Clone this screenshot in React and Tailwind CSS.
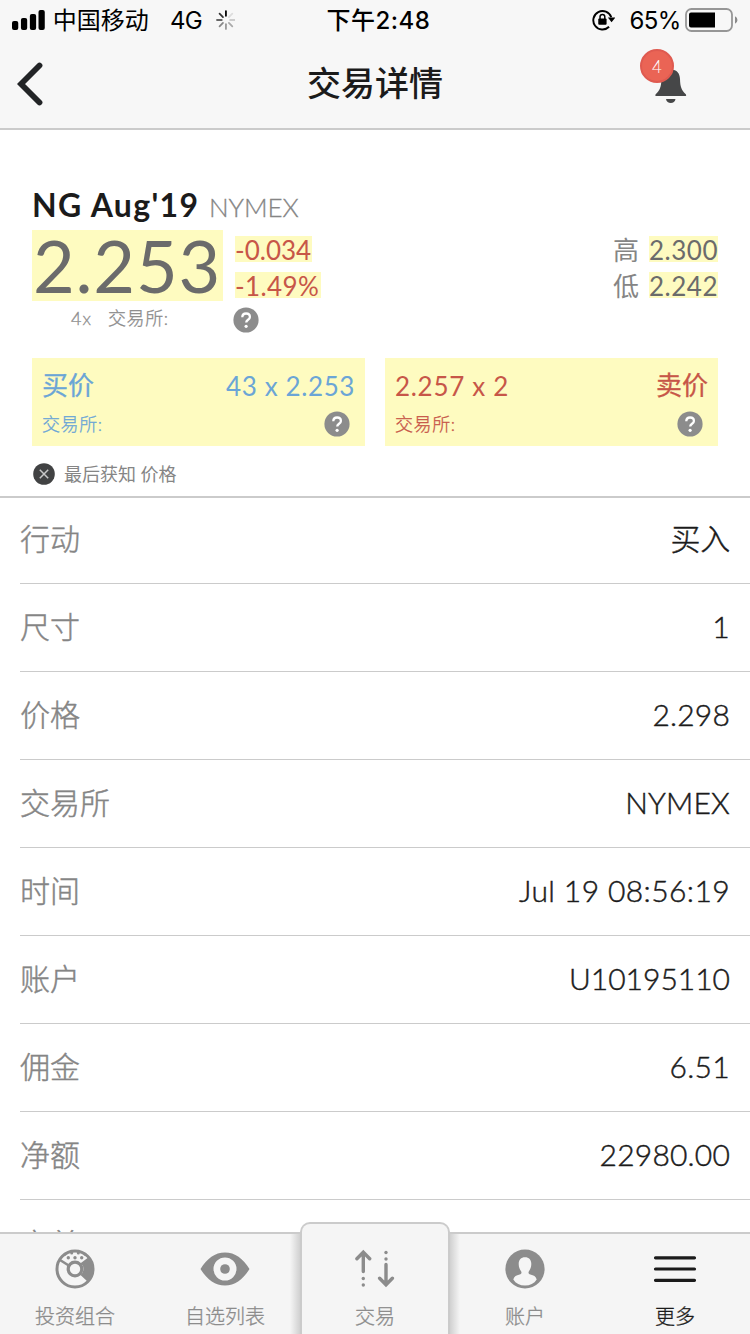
const rows = [
  ['行动', '买入', 'tracking-[-0.3px]'],
  ['尺寸', '1', 'tracking-[0.4px]'],
  ['价格', '2.298', 'tracking-[0.2px]'],
  ['交易所', 'NYMEX', 'tracking-[0.2px]'],
  ['时间', 'Jul 19 08:56:19', 'tracking-[0.4px]'],
  ['账户', 'U10195110', 'tracking-[0px]'],
  ['佣金', '6.51', 'tracking-[0.3px]'],
  ['净额', '22980.00', 'tracking-[0.2px]'],
  ['定单ID', '', ''],
];

function Help() {
  return (
    <svg width="26" height="26" viewBox="0 0 26 26" className="block shrink-0">
      <circle cx="13" cy="13" r="12.6" fill="#8c8c8c" />
      <path d="M9.3 10.2c0-2.3 1.6-3.7 3.8-3.7s3.8 1.4 3.8 3.4c0 2.9-3.7 2.8-3.7 5.7" fill="none" stroke="#fff" strokeWidth="2.3" />
      <circle cx="13.1" cy="19.3" r="1.6" fill="#fff" />
    </svg>
  );
}

function StatusBar() {
  return (
    <div className="flex h-10 items-center pl-3 pr-[11px] pt-[2px] text-[24px] leading-[38px] text-black">
      <svg width="33" height="20" viewBox="0 0 33 20" className="-mt-[3px] block">
        <rect x="0" y="11" width="6.300" height="9" rx="2" />
        <rect x="9" y="8" width="6.300" height="12" rx="2" />
        <rect x="18" y="4" width="6.300" height="16" rx="2" />
        <rect x="26.700" y="0" width="6.300" height="20" rx="2" />
      </svg>
      <span className="ml-2 w-[118px] whitespace-nowrap font-['Inter','Noto_Sans_CJK_SC',sans-serif]">中国移动</span>
      <span className="w-[46px] font-['Inter',sans-serif] text-[24px] tracking-[-0.6px]">4G</span>
      <svg width="20" height="20" viewBox="0 0 20 20" className="-mt-[3px] block" strokeWidth="1.8" strokeLinecap="round">
        <path d="M10 5.8V1" stroke="#000" />
        <path d="M13 7L16.4 3.6" stroke="#ddd" />
        <path d="M14.2 10H19" stroke="#ccc" />
        <path d="M13 13L16.4 16.4" stroke="#aaa" />
        <path d="M10 14.2V19" stroke="#999" />
        <path d="M7 13L3.6 16.4" stroke="#888" />
        <path d="M5.8 10H1" stroke="#666" />
        <path d="M7 7L3.6 3.6" stroke="#333" />
      </svg>
      <span className="ml-[91px] w-[266px] whitespace-nowrap font-['Inter','Noto_Sans_CJK_SC',sans-serif] font-medium tracking-[0.5px]">下午2:48</span>
      <svg width="24" height="22" viewBox="0 0 24 22" className="-mt-[2px] ml-px block">
        <path d="M19.4 8.200A9.300 9.300 0 1 0 17.2 17.800" fill="none" stroke="#000" strokeWidth="1.900" />
        <path d="M16 8.600H23.400L19.7 13.200z" />
        <rect x="6.300" y="9.500" width="8.400" height="6.200" rx="1" />
        <path d="M8.100 10V7.800a2.400 2.400 0 0 1 4.800 0V10" fill="none" stroke="#000" strokeWidth="1.500" />
      </svg>
      <span className="ml-[14px] w-[56px] font-['Inter',sans-serif] tracking-[-0.6px]">65%</span>
      <svg width="54" height="24" viewBox="0 0 54 24" className="-mt-[2px] block shrink-0">
        <rect x="1" y="1" width="46" height="22" rx="5.5" fill="none" stroke="#969696" strokeWidth="1.8" />
        <path d="M6 4.5H30V19.500H6a2 2 0 0 1-2-2V6.500a2 2 0 0 1 2-2z" fill="#000" />
        <path d="M50 8.300a4 4 0 0 1 0 7.400z" fill="#8a8a8a" />
      </svg>
    </div>
  );
}

function Header() {
  return (
    <header className="h-[130px] shrink-0 border-b-2 border-[#cbcbcb] bg-[#f7f7f7]">
      <StatusBar />
      <div className="flex h-[88px] items-center pl-[17px]">
        <svg width="30" height="44" viewBox="0 0 30 44" className="block">
          <path d="M22.500 3.500L4 22L22.500 40.500" fill="none" stroke="#222426" strokeWidth="5.800" strokeLinecap="round" strokeLinejoin="miter" />
        </svg>
        <h1 className="-mt-[3px] ml-[260px] w-[333px] text-[34px] font-medium leading-[50px] text-[#1b1b1b]">交易详情</h1>
        <div className="relative -mt-[12px] h-[58px] w-12">
          <svg width="48" height="58" viewBox="0 0 48 58" className="block" fill="#464748">
            <path d="M31 20.500c6 0 8.800 4 9 9.500c.2 8 1.500 11 5.800 15.200c.8.900.4 1.800-.8 1.800H16.500c-1.200 0-1.600-.900-.8-1.800c4.300-4.200 5.500-7.200 5.700-15.200C22.100 24.500 25 20.500 31 20.500z" />
            <path d="M26 50H35.500c-.3 2.700-2.300 4-4.700 4s-4.500-1.300-4.800-4z" />
          </svg>
          <span className="absolute left-0 top-0 flex size-[34px] items-center justify-center rounded-full border-2 border-[#df5a50] bg-[#ea6455] text-[17px] font-light leading-none text-white">4</span>
        </div>
      </div>
    </header>
  );
}

function Quote() {
  return (
    <section className="h-[368px] shrink-0 border-b-2 border-[#cbcbcb] px-8 pt-[52px]">
      <div className="flex h-12 items-baseline text-[#1b1b1b]">
        <span className="w-[177px] whitespace-nowrap text-[32px] font-bold leading-[46px] tracking-[1.35px]">NG Aug'19</span>
        <span className="text-[26px] font-light tracking-[-0.1px] text-[#858585] [-webkit-text-stroke:0.3px]">NYMEX</span>
      </div>
      <div className="flex h-[72px]">
        <div className="h-[71px] w-[191px] whitespace-nowrap bg-[#fefbc0] pl-px text-[72px] leading-[70px] tracking-[0.8px] text-[#6b6b6b]">2.253</div>
        <div className="ml-3 flex flex-col items-start gap-[10px] pt-1.5 text-[26px] leading-[28px] text-[#c75648]">
          <span className="h-[26px] w-[77px] whitespace-nowrap bg-[#fefbc0]">-0.034</span>
          <span className="h-[26px] w-[86px] whitespace-nowrap bg-[#fefbc0] tracking-[0.4px]">-1.49%</span>
        </div>
        <div className="ml-auto flex flex-col gap-[10px] pt-1.5 text-[26px] leading-[28px] text-[#6b6b6b]">
          <div className="flex h-[26px] gap-2.5"><span className="text-[#858585]">高</span><span className="w-[69px] bg-[#fefbc0] tracking-[0.5px]">2.300</span></div>
          <div className="flex h-[26px] gap-2.5"><span className="text-[#858585]">低</span><span className="w-[69px] bg-[#fefbc0] tracking-[0.5px]">2.242</span></div>
        </div>
      </div>
      <div className="flex h-9 items-center pl-[39px] text-[18px] text-[#8c8c8c]">
        <span className="-mt-[3px] w-[37px] font-light tracking-[1px] [-webkit-text-stroke:0.3px]">4x</span>
        <span className="-mt-[3px] w-[125px] font-light tracking-[0.6px] [-webkit-text-stroke:0.3px]">交易所:</span>
        <Help />
      </div>
      <div className="mt-5 flex gap-5">
        <div className="h-[88px] flex-1 bg-[#fefbc0] px-[10px] pt-[9px] text-[#6ba5d6]">
          <div className="flex h-9 items-center justify-between text-[26px] leading-9">
            <span className="[-webkit-text-stroke:0.3px]">买价</span>
            <span className="pt-[2px] tracking-[0.6px]">43 x 2.253</span>
          </div>
          <div className="mt-2 flex h-[26px] items-center justify-between pr-[5px] text-[18px]"><span className="font-light tracking-[0.6px] [-webkit-text-stroke:0.3px]">交易所:</span><Help /></div>
        </div>
        <div className="h-[88px] flex-1 bg-[#fefbc0] px-[10px] pt-[9px] text-[#c75648]">
          <div className="flex h-9 items-center justify-between text-[26px] leading-9">
            <span className="pt-[2px] tracking-[0.7px]">2.257 x 2</span>
            <span className="[-webkit-text-stroke:0.3px]">卖价</span>
          </div>
          <div className="mt-2 flex h-[26px] items-center justify-between pr-[5px] text-[18px]"><span className="font-light tracking-[0.6px] [-webkit-text-stroke:0.3px]">交易所:</span><Help /></div>
        </div>
      </div>
      <div className="mt-3.5 flex h-[28px] items-center gap-[9px] pl-px text-[18px] text-[#858585]">
        <svg width="22" height="22" viewBox="0 0 22 22" className="block">
          <circle cx="11" cy="11" r="10.800" fill="#414243" />
          <path d="M6.800 6.800L15.200 15.200M15.200 6.800L6.800 15.200" stroke="#c8c8c8" strokeWidth="1.500" />
        </svg>
        <span>最后获知 价格</span>
      </div>
    </section>
  );
}

function Donut() {
  return (
    <svg width="40" height="40" viewBox="0 0 40 40" className="block" fill="none" stroke="#8c8c8c">
      <path d="M26.500 14.500L35 9A18.500 18.500 0 0 1 32.500 32.500L25.500 26A8 8 0 0 0 26.500 14.500z" fill="#8c8c8c" stroke="none" />
      <circle cx="20" cy="20" r="18" strokeWidth="3" />
      <circle cx="20" cy="20" r="6.800" strokeWidth="3.200" />
      <path d="M5 11L14.500 17M34 9.500L26 15.500" strokeWidth="2.600" />
      <g fill="#8c8c8c" stroke="none">
        <circle cx="13.300" cy="8.800" r="1.700" /><circle cx="20" cy="8.800" r="1.700" /><circle cx="26.700" cy="8.800" r="1.700" />
        <circle cx="10" cy="5.300" r="1.500" /><circle cx="16.700" cy="4" r="1.500" /><circle cx="23.300" cy="4" r="1.500" /><circle cx="30" cy="5.300" r="1.500" />
      </g>
    </svg>
  );
}

function Eye() {
  return (
    <svg width="50" height="40" viewBox="0 0 50 40" className="block">
      <path fillRule="evenodd" fill="#8c8c8c" d="M.5 20C7 9.500 15 3.500 25 3.500S43 9.500 49.500 20C43 30.500 35 36.500 25 36.500S7 30.500 .5 20zM25 8.500a11.500 11.500 0 1 0 0 23a11.500 11.500 0 1 0 0-23z" />
      <circle cx="25" cy="20" r="4.800" fill="#8c8c8c" />
    </svg>
  );
}

function Arrows() {
  return (
    <svg width="40" height="40" viewBox="0 0 40 40" className="block" fill="none" stroke="#8c8c8c" strokeWidth="3.400" strokeLinecap="round">
      <path d="M8.300 22.500V5M1.900 9.800L8.300 3.200L14.700 9.800" />
      <path d="M31 15.500V34M24.600 29.200L31 35.800L37.400 29.200" />
      <g fill="#8c8c8c" stroke="none">
        <circle cx="8.300" cy="29.500" r="1.700" /><circle cx="8.300" cy="36" r="1.700" />
        <circle cx="31" cy="3.500" r="1.700" /><circle cx="31" cy="10" r="1.700" />
      </g>
    </svg>
  );
}

function Person() {
  return (
    <svg width="40" height="40" viewBox="0 0 40 40" className="block">
      <circle cx="20" cy="20" r="19.600" fill="#8c8c8c" />
      <path fill="#f5f5f5" d="M20 8.200c4 0 6.300 2.600 6.300 6.800c0 3.200-1 5-2.400 7.300c-.8 1.700-.4 2.700 1.500 3.300c3.300.8 5.500 1.800 6.300 5c-2.500 4-6.700 6-11.700 6s-9.200-2-11.700-6c.8-3.200 3-4.200 6.300-5c1.900-.6 2.300-1.600 1.500-3.300c-1.400-2.300-2.400-4.100-2.400-7.300c0-4.200 2.300-6.800 6.300-6.800z" />
    </svg>
  );
}

function Menu() {
  return (
    <svg width="44" height="40" viewBox="0 0 44 40" className="block">
      <path d="M2.500 8.800H41.500M2.500 20H41.500M2.500 31.300H41.500" stroke="#1b1b1b" strokeWidth="3.200" strokeLinecap="round" />
    </svg>
  );
}

function Tab({ icon, label, active }) {
  return (
    <div className={active ? 'flex w-[150px] flex-col items-center pt-[15px] text-[#1b1b1b]' : 'flex w-[150px] flex-col items-center pt-[15px] text-[#8c8c8c]'}>
      {icon}
      <span className="mt-[13px] text-[20px] font-light leading-[28px] [-webkit-text-stroke:0.3px]">{label}</span>
    </div>
  );
}

export default function App() {
  return (
    <div className="flex h-[1334px] w-[750px] flex-col overflow-hidden bg-white font-['Lato','Noto_Sans_CJK_SC',sans-serif]" lang="zh-CN">
      <Header />
      <Quote />
      <main className="min-h-0 flex-1 overflow-hidden pl-5">
        <div className="-mt-0.5">
          {rows.map(([label, value, spacing]) => (
            <div key={label} className={`flex h-[88px] items-center justify-between border-b border-[#cbcbcb] pr-5 text-[30px] font-light leading-[44px] [-webkit-text-stroke:0.45px] ${value ? 'pb-1' : 'pb-px'}`}>
              <span className="text-[#858585]">{label}</span>
              <span className={`text-[#1b1b1b] ${spacing}`}>{value}</span>
            </div>
          ))}
        </div>
      </main>
      <nav className="flex h-[102px] shrink-0 border-t-2 border-[#cbcbcb] bg-[#f5f5f5]">
        <Tab icon={<Donut />} label="投资组合" />
        <Tab icon={<Eye />} label="自选列表" />
        <div className="-ml-[10px] w-[10px] bg-gradient-to-r from-transparent to-black/15" />
        <div className="-mt-3 h-[112px] w-[150px] rounded-t-[10px] border-x-2 border-t-2 border-[#cbcbcb] bg-[#f5f5f5] pt-[10px]">
          <div className="-mx-0.5"><Tab icon={<Arrows />} label="交易" /></div>
        </div>
        <div className="-mr-[10px] w-[10px] bg-gradient-to-l from-transparent to-black/15" />
        <Tab icon={<Person />} label="账户" />
        <Tab icon={<Menu />} label="更多" active />
      </nav>
    </div>
  );
}
